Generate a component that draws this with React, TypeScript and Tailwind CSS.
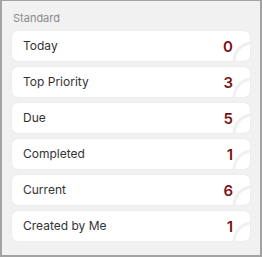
import * as React from 'react';

interface StandardItem {
  label: string;
  count: number;
}

const items: StandardItem[] = [
  { label: 'Today', count: 0 },
  { label: 'Top Priority', count: 3 },
  { label: 'Due', count: 5 },
  { label: 'Completed', count: 1 },
  { label: 'Current', count: 6 },
  { label: 'Created by Me', count: 1 },
];

function CornerArc() {
  return (
    <svg
      className="absolute right-0 bottom-0 pointer-events-none"
      width="20"
      height="24"
      viewBox="0 0 20 24"
      fill="none"
    >
      <path d="M4 24 C 5 14, 11 8, 20 6" stroke="#f0f0f0" strokeWidth="3" />
    </svg>
  );
}

function StandardRow({ item }: { item: StandardItem }) {
  return (
    <div className="relative h-[30px] flex items-center justify-between pl-[11px] pr-[17px] bg-white rounded-[6px] overflow-hidden shadow-[0_0_2px_rgba(0,0,0,0.07)]">
      <span className="text-[12px] text-[#333333] leading-none">{item.label}</span>
      <span className="relative z-10 text-[15px] font-semibold text-[#7a1414] leading-none">{item.count}</span>
      <CornerArc />
    </div>
  );
}

export default function App() {
  return (
    <div
      className="w-[262px] h-[257px] bg-[#f1f1f1] border-t border-x-2 border-b-2 border-[#a3a3a3] pt-[10px] px-[10px]"
      style={{ fontFamily: 'Inter, "Noto Sans", sans-serif' }}
    >
      <div className="text-[11px] text-[#8a8a8a] leading-none ml-[1px] mb-[7px] mt-[2px]">Standard</div>
      <div className="flex flex-col gap-[6px]">
        {items.map((item) => (
          <StandardRow key={item.label} item={item} />
        ))}
      </div>
    </div>
  );
}
